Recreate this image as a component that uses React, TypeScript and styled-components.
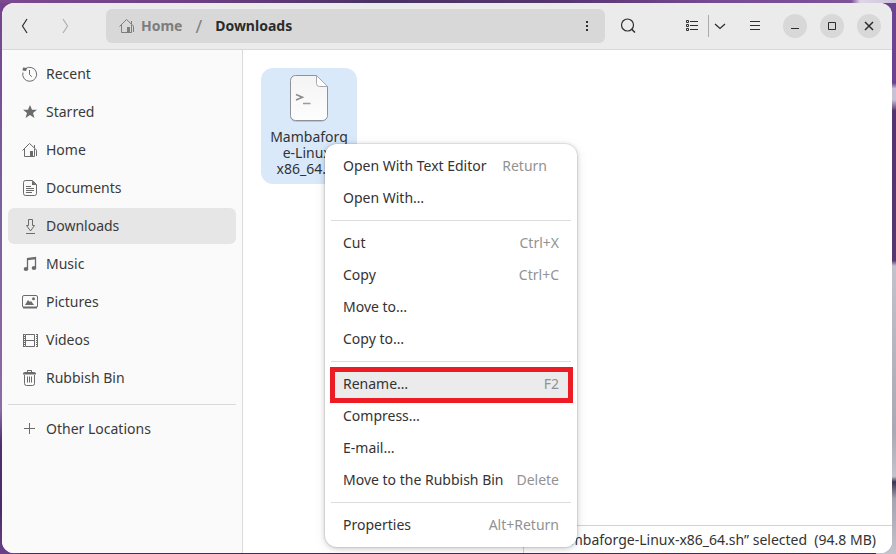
import React from "react";
import styled, { createGlobalStyle, css } from "styled-components";

const GlobalStyle = createGlobalStyle`
  *, *::before, *::after { box-sizing: border-box; }
  html, body, #root { height: 100%; }
  body {
    margin: 0;
    overflow: hidden;
    font-family: "Noto Sans", "Open Sans", sans-serif;
    font-size: 14px;
    line-height: 20px;
    color: #333333;
  }
  button { font: inherit; color: inherit; background: none; border: 0; padding: 0; cursor: pointer; }
  svg { display: block; flex: none; }
`;

const Desktop = styled.div`
  height: 100%;
  padding: 3px 4px 1px 2px;
  background:
    linear-gradient(90deg, #7b4a91 0%, #6f4088 20%, #4a3264 42%, #54356f 62%, #774a94 80%, #7d5299 95%, #ddd6e6 96%, #cfc4dc 100%) top / 100% 3px no-repeat,
    linear-gradient(180deg, #75428c 0%, #7a63a0 40%, #86629f 55%, #8d6ba5 74%, #4c3070 80%, #4c2c66 92%, #6a4088 100%) left / 20px 100% no-repeat,
    linear-gradient(180deg, #6b4390 0 15%, #c9c2d4 16% 18%, #55346f 20%, #55386f 47%, #c4c1cc 48%, #aaa8b4 78%, #c4c2cc 86%, #3c3350 87%, #a5a3b0 90%, #c4c2cc 100%) right / 20px 100% no-repeat,
    #46275e;
`;

const Window = styled.div`
  position: relative;
  height: 100%;
  display: flex;
  flex-direction: column;
  border-radius: 12px;
  overflow: hidden;
  background: #ffffff;
`;

const HeaderBar = styled.header`
  display: flex;
  align-items: center;
  height: 47px;
  flex: none;
  padding: 0 11px 0 6px;
  background: #ebebeb;
  border-bottom: 1px solid #d8d8d8;
`;

const IconButton = styled.button<{ $wide?: boolean }>`
  display: flex;
  align-items: center;
  justify-content: center;
  width: ${(p) => (p.$wide ? 34 : 22)}px;
  height: 34px;
  border-radius: 6px;
  color: #2e2e2e;
  &:disabled { color: #b0b0b0; }
`;

const NavGroup = styled.div`
  display: flex;
  gap: 6px;
  margin-right: 24px;
`;

const PathBar = styled.nav`
  display: flex;
  align-items: center;
  flex: 1;
  height: 34px;
  padding: 0 7px 0 13px;
  border-radius: 6px;
  background: #d8d8d8;
  font-weight: 700;
`;

const Crumb = styled.a<{ $current?: boolean }>`
  display: flex;
  align-items: center;
  gap: 6px;
  text-decoration: none;
  color: ${(p) => (p.$current ? "#2b2b2b" : "#7d7d7d")};
`;

const Slash = styled.span`
  margin: 0 13px;
  font-weight: 400;
  font-size: 18px;
  color: #808080;
`;

const PathMenu = styled(IconButton)`
  margin-left: auto;
`;

const SearchSlot = styled.div`
  margin: 0 29px 0 6px;
`;

const ViewSwitch = styled.div`
  display: flex;
  align-items: center;
  margin-right: 7px;
`;

const ViewDivider = styled.span`
  width: 1px;
  height: 22px;
  background: #ababab;
`;

const WindowControls = styled.div`
  display: flex;
  gap: 13px;
  margin-left: 11px;
`;

const RoundButton = styled.button`
  display: flex;
  align-items: center;
  justify-content: center;
  width: 24px;
  height: 24px;
  border-radius: 50%;
  background: #d8d8d8;
  color: #2b2b2b;
`;

const Body = styled.div`
  display: flex;
  flex: 1;
  min-height: 0;
`;

const Sidebar = styled.nav`
  display: flex;
  flex-direction: column;
  gap: 2px;
  width: 241px;
  flex: none;
  padding: 6px;
  background: #fafafa;
  border-right: 1px solid #dadada;
`;

const Place = styled.a<{ $active?: boolean }>`
  display: flex;
  align-items: center;
  gap: 8px;
  height: 36px;
  flex: none;
  padding: 0 14px;
  border-radius: 6px;
  color: #3a3a3a;
  text-decoration: none;
  ${(p) => p.$active && css`background: #e6e6e6;`}
  svg { color: #6b6b6b; }
`;

const PlaceRule = styled.hr`
  width: 100%;
  height: 1px;
  flex: none;
  margin: 6px 0 4px;
  border: 0;
  background: #d9d9d9;
`;

const Content = styled.main`
  display: flex;
  flex-direction: column;
  flex: 1;
  min-width: 0;
  background: #ffffff;
`;

const FileGrid = styled.div`
  display: flex;
  flex: 1;
  align-items: flex-start;
  padding: 18px;
`;

const FileTile = styled.button`
  display: flex;
  flex-direction: column;
  align-items: center;
  gap: 5px;
  width: 96px;
  padding: 6px 7px 7px;
  border-radius: 12px;
  background: #d9e9fa;
  line-height: 16px;
`;

const FileName = styled.span`
  width: 100%;
  text-align: center;
  overflow-wrap: anywhere;
`;

const StatusBar = styled.div`
  align-self: flex-end;
  padding: 4px 16px 3px 20px;
  border: 1px solid #d3d3d3;
  border-width: 1px 0 0 1px;
  background: #ffffff;
  white-space: pre;
`;

const ContextMenu = styled.div`
  position: absolute;
  left: 323px;
  top: 141px;
  width: 252px;
  padding: 6px;
  border-radius: 12px;
  background: #ffffff;
  box-shadow: 0 0 0 1px rgba(0, 0, 0, 0.06), 0 1px 5px rgba(0, 0, 0, 0.2), 0 2px 14px rgba(0, 0, 0, 0.08);
`;

const MenuItem = styled.button<{ $marked?: boolean }>`
  display: flex;
  align-items: center;
  justify-content: space-between;
  gap: 12px;
  position: relative;
  width: 100%;
  height: 32px;
  padding: 0 12px;
  text-align: left;
  white-space: nowrap;
  ${(p) =>
    p.$marked &&
    css`
      background: #ebebeb;
      &::after {
        content: "";
        position: absolute;
        inset: -1px -2px -3px -1px;
        border: 5px solid #ed1c24;
      }
    `}
`;

const Shortcut = styled.span<{ $inset?: boolean }>`
  color: #929292;
  margin-right: ${(p) => (p.$inset ? 12 : 0)}px;
`;

const MenuRule = styled.hr`
  height: 1px;
  margin: 6px 0;
  border: 0;
  background: #dcdcdc;
`;

type IconProps = { children: React.ReactNode; size?: number };
const Icon = ({ children, size = 16 }: IconProps) => (
  <svg width={size} height={size} viewBox={`0 0 ${size} ${size}`} fill="none" stroke="currentColor" aria-hidden="true">
    {children}
  </svg>
);

const HomeIcon = () => (
  <Icon>
    <path d="M.5 8.5 7.5 1.5l7.5 7M2.5 7v7.5h10V7M12.5 3v3M14.5 8.5V14" />
    <path d="M8 9h3v6H8z" fill="currentColor" stroke="none" />
  </Icon>
);

const icons = {
  recent: (
    <Icon>
      <path d="M3.6 2.6A7 7 0 1 1 .9 6.5" />
      <path d="M1 1.5 5 2 4 5 .5 4.5z" fill="currentColor" stroke="none" />
      <path d="M7.5 4v4.5l2.3 2.2" />
    </Icon>
  ),
  starred: (
    <Icon>
      <path d="m8 1 2 4.800h5l-4 3.200 1.500 5L8 11.100 3.500 14 5 9 1 5.800h5z" fill="currentColor" stroke="none" />
    </Icon>
  ),
  home: <HomeIcon />,
  documents: (
    <Icon>
      <path d="M3.500 .5h7L14.500 4.500V13.500a2 2 0 0 1-2 2h-9a2 2 0 0 1-2-2v-11a2 2 0 0 1 2-2z" />
      <path d="M10 .5 14.500 5H10z" fill="currentColor" stroke="none" />
      <path d="M4 6.500h5M4 8.500h8M4 10.500h8M4 12.500h6" />
    </Icon>
  ),
  downloads: (
    <Icon>
      <path d="M6.500 1.500h4v6h2l-4 5.500-4-5.500h2zM4 15.500h9" />
    </Icon>
  ),
  music: (
    <Icon>
      <path d="M5.500 12.500V2.500L13.500 1.500v10M5.500 3.500l8-1" strokeWidth="1.300" />
      <ellipse cx="4" cy="13" rx="2.300" ry="1.900" fill="currentColor" stroke="none" />
      <ellipse cx="12" cy="12" rx="2.300" ry="1.900" fill="currentColor" stroke="none" />
    </Icon>
  ),
  pictures: (
    <Icon>
      <rect x=".5" y="1.500" width="15" height="12" rx="1.500" />
      <path d="M1 13.500h14" strokeWidth="2" />
      <path d="M3 11l3-5 2 2 1-1 3 4z" fill="currentColor" stroke="none" />
      <circle cx="11.500" cy="4.700" r="1.500" fill="currentColor" stroke="none" />
    </Icon>
  ),
  videos: (
    <Icon>
      <path d="M3.500 2.500h9v12h-9zM3.500 8.500h9" />
      <path d="M2 2v13M15 2v13" strokeWidth="2" strokeDasharray="1 1" />
      <path d="M1.500 2v13M15.500 2v13" />
    </Icon>
  ),
  bin: (
    <Icon>
      <path d="M2.500 5v8.500q0 2 2 2h6q2 0 2-2V5M5.500 6.500v6M7.500 6.500v6M9.500 6.500v6" />
      <path d="M1 4.500V3.500Q1 2 3 2h2V.5q0-.5.500-.5h4q.5 0 .5.500V2h2q2 0 2 1.500v1zM6 1v1h3V1z" fill="currentColor" fillRule="evenodd" stroke="none" />
    </Icon>
  ),
  other: (
    <Icon>
      <path d="M2 7.500h11M7.500 2v11" />
    </Icon>
  ),
};

const places: { icon: keyof typeof icons; label: string }[] = [
  { icon: "recent", label: "Recent" },
  { icon: "starred", label: "Starred" },
  { icon: "home", label: "Home" },
  { icon: "documents", label: "Documents" },
  { icon: "downloads", label: "Downloads" },
  { icon: "music", label: "Music" },
  { icon: "pictures", label: "Pictures" },
  { icon: "videos", label: "Videos" },
  { icon: "bin", label: "Rubbish Bin" },
];

type Action = { label: string; keys?: string; inset?: boolean; marked?: boolean };
const menuSections: Action[][] = [
  [{ label: "Open With Text Editor", keys: "Return", inset: true }, { label: "Open With…" }],
  [
    { label: "Cut", keys: "Ctrl+X" },
    { label: "Copy", keys: "Ctrl+C" },
    { label: "Move to…" },
    { label: "Copy to…" },
  ],
  [
    { label: "Rename…", keys: "F2", marked: true },
    { label: "Compress…" },
    { label: "E-mail…" },
    { label: "Move to the Rubbish Bin", keys: "Delete" },
  ],
  [{ label: "Properties", keys: "Alt+Return" }],
];

const ScriptFileIcon = () => (
  <svg width="40" height="50" viewBox="0 0 40 50" aria-hidden="true">
    <defs>
      <linearGradient id="paper" x1="0" y1="0" x2="0" y2="1">
        <stop offset="0" stopColor="#f4f4f4" />
        <stop offset="1" stopColor="#fdfdfd" />
      </linearGradient>
    </defs>
    <path d="M6 2h21l11 11v29a6 6 0 0 1-6 6H7a6 6 0 0 1-6-6V7a5 5 0 0 1 5-5z" fill="#000" opacity=".15" />
    <path d="M6.500 1.500H27.500L38.500 12.500V41.500a5 5 0 0 1-5 5h-27a5 5 0 0 1-5-5v-35a5 5 0 0 1 5-5z" fill="url(#paper)" stroke="#8c9298" />
    <path d="M27.500 1.500v8a3 3 0 0 0 3 3h8z" fill="#ffffff" stroke="#a5a9ad" />
    <path d="m7 20.500 6.500 2.700L7 26" fill="none" stroke="#8b8b8b" strokeWidth="1.500" />
    <path d="M14 29.500h7.500" stroke="#9a9a9a" strokeWidth="1.500" />
  </svg>
);

export default function App() {
  return (
    <Desktop>
      <GlobalStyle />
      <Window>
        <HeaderBar>
          <NavGroup>
            <IconButton $wide aria-label="Back">
              <Icon><path d="M10 1 5.500 8l4.500 7" strokeWidth="1.200" /></Icon>
            </IconButton>
            <IconButton $wide aria-label="Forward" disabled>
              <Icon><path d="M6 1l4.500 7L6 15" strokeWidth="1.200" /></Icon>
            </IconButton>
          </NavGroup>
          <PathBar aria-label="Path">
            <Crumb href="#home"><HomeIcon />Home</Crumb>
            <Slash>/</Slash>
            <Crumb href="#downloads" $current>Downloads</Crumb>
            <PathMenu aria-label="Folder menu">
              <Icon>
                <path d="M7 3h2v2H7zM7 7h2v2H7zM7 11h2v2H7z" fill="currentColor" stroke="none" />
              </Icon>
            </PathMenu>
          </PathBar>
          <SearchSlot>
            <IconButton $wide aria-label="Search">
              <Icon>
                <circle cx="7.500" cy="7" r="6" strokeWidth="1.200" />
                <path d="m11.500 11 3.500 3.500" strokeWidth="1.500" />
              </Icon>
            </IconButton>
          </SearchSlot>
          <ViewSwitch>
            <IconButton $wide aria-label="List view">
              <Icon>
                <path d="M3.500 2.500h2v2h-2zM3.500 6.500h2v2h-2zM3.500 10.500h2v2h-2zM7 3.500h8M7 7.500h8M7 11.500h8" />
              </Icon>
            </IconButton>
            <ViewDivider />
            <IconButton aria-label="View options">
              <Icon><path d="m3 6 5 4.500L13 6" strokeWidth="1.300" /></Icon>
            </IconButton>
          </ViewSwitch>
          <IconButton $wide aria-label="Main menu">
            <Icon><path d="M3 3.500h10M3 7.500h10M3 11.500h10" /></Icon>
          </IconButton>
          <WindowControls>
            <RoundButton aria-label="Minimise">
              <Icon><path d="M4 10.500h8" /></Icon>
            </RoundButton>
            <RoundButton aria-label="Maximise">
              <Icon><path d="M4.500 4.500h7v7h-7z" /></Icon>
            </RoundButton>
            <RoundButton aria-label="Close">
              <Icon><path d="m4 4 8 8M12 4l-8 8" strokeWidth="1.500" /></Icon>
            </RoundButton>
          </WindowControls>
        </HeaderBar>
        <Body>
          <Sidebar aria-label="Places">
            {places.map((p) => (
              <Place key={p.label} href={`#${p.icon}`} $active={p.icon === "downloads"}>
                {icons[p.icon]}
                {p.label}
              </Place>
            ))}
            <PlaceRule />
            <Place href="#other">
              {icons.other}
              Other Locations
            </Place>
          </Sidebar>
          <Content>
            <FileGrid>
              <FileTile>
                <ScriptFileIcon />
                <FileName>Mambaforge-Linux-x86_64.sh</FileName>
              </FileTile>
            </FileGrid>
            <StatusBar role="status">{"“Mambaforge-Linux-x86_64.sh” selected  (94.8 MB)"}</StatusBar>
          </Content>
        </Body>
        <ContextMenu role="menu">
          {menuSections.map((section, i) => (
            <React.Fragment key={section[0].label}>
              {i > 0 && <MenuRule />}
              {section.map((a) => (
                <MenuItem key={a.label} role="menuitem" $marked={a.marked}>
                  {a.label}
                  {a.keys && <Shortcut $inset={a.inset}>{a.keys}</Shortcut>}
                </MenuItem>
              ))}
            </React.Fragment>
          ))}
        </ContextMenu>
      </Window>
    </Desktop>
  );
}
